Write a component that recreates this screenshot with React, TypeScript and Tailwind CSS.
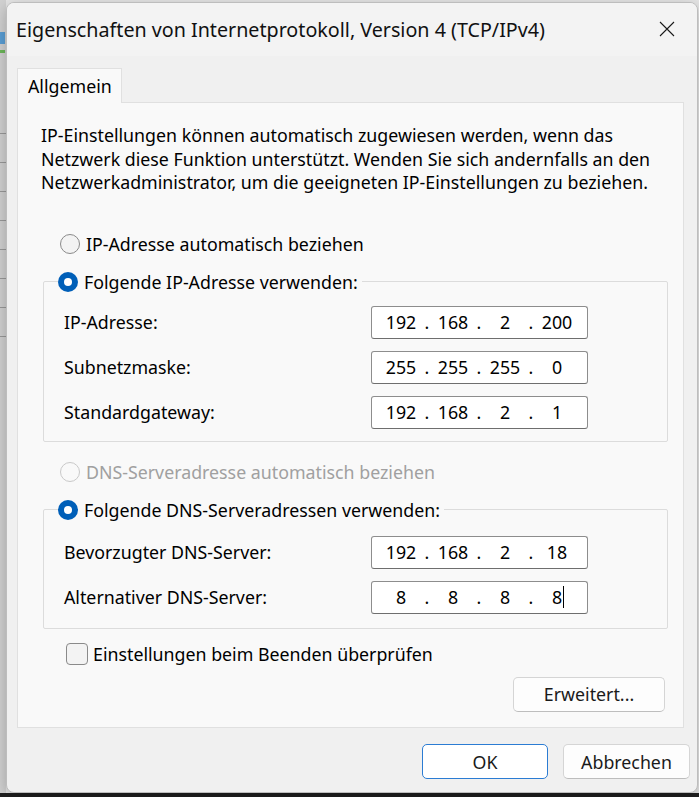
import type { ReactNode } from "react";

const font = "font-['Segoe_UI','Noto_Sans',sans-serif]";

function Radio({ checked, disabled }: { checked?: boolean; disabled?: boolean }) {
  if (checked) {
    return (
      <span className="flex h-[20px] w-[20px] shrink-0 items-center justify-center rounded-full bg-[#005fb8]">
        <span className="h-[8px] w-[8px] rounded-full bg-white" />
      </span>
    );
  }
  return (
    <span
      className={
        disabled
          ? "h-[20px] w-[20px] shrink-0 rounded-full border border-[#c9c9c9] bg-[#f9f9f9]"
          : "h-[20px] w-[20px] shrink-0 rounded-full border border-[#8a8a8a] bg-[#f3f3f3]"
      }
    />
  );
}

function RadioLabel({
  checked,
  disabled,
  children,
}: {
  checked?: boolean;
  disabled?: boolean;
  children: ReactNode;
}) {
  return (
    <div className="flex h-[24px] items-center gap-[6px]">
      <Radio checked={checked} disabled={disabled} />
      <span className={disabled ? "text-[#a0a0a0]" : "text-black"}>{children}</span>
    </div>
  );
}

function IpField({ parts, caret }: { parts: string[]; caret?: boolean }) {
  return (
    <div className="flex h-[33px] w-[217px] items-center rounded-[3px] border border-[#8d8d8d] border-b-[#6e6e6e] bg-white pl-[9px]">
      {parts.map((p, i) => (
        <div key={i} className="flex items-center">
          {i > 0 ? <span className="w-[12px] text-center">.</span> : null}
          <span className="relative w-[40px] text-center">
            {p}
            {caret && i === parts.length - 1 ? (
              <span className="absolute left-[26px] top-[1px] h-[22px] w-[1px] bg-black" />
            ) : null}
          </span>
        </div>
      ))}
    </div>
  );
}

function Row({ label, parts, caret }: { label: string; parts: string[]; caret?: boolean }) {
  return (
    <div className="flex items-center justify-between pl-[20px] pr-[79px]">
      <span>{label}</span>
      <IpField parts={parts} caret={caret} />
    </div>
  );
}

function Group({ legend, children }: { legend: string; children: ReactNode }) {
  return (
    <fieldset className="ml-[25px] mr-[15px] rounded-[2px] border border-[#dcdcdc] p-0">
      <legend className="ml-[14px] pr-[4px]">
        <RadioLabel checked>{legend}</RadioLabel>
      </legend>
      {children}
    </fieldset>
  );
}

export default function App() {
  return (
    <div className={`relative h-[797px] w-[699px] overflow-hidden bg-[#1f1f1f] ${font} text-[17.8px] leading-[24px] text-black`}>
      {/* background window on the desktop */}
      <div className="h-[793px] w-full bg-[#e6e6e6]">
        <div className="flex h-full w-[6px] flex-col bg-[#d2d2d2]">
          <div className="mt-[32px] h-[12px] w-[5px] bg-[#5a9fd6]" />
          <div className="mt-[6px] h-[3px] w-[5px] bg-[#6cb85a]" />
          <div className="mt-[80px] flex flex-col gap-[28px]">
            <div className="h-[1px] bg-[#9a9a9a]" />
            <div className="h-[1px] bg-[#9a9a9a]" />
            <div className="h-[1px] bg-[#9a9a9a]" />
            <div className="h-[1px] bg-[#9a9a9a]" />
            <div className="h-[1px] bg-[#9a9a9a]" />
            <div className="h-[1px] bg-[#9a9a9a]" />
            <div className="h-[1px] bg-[#9a9a9a]" />
            <div className="h-[1px] bg-[#9a9a9a]" />
          </div>
        </div>
      </div>

      {/* dialog */}
      <div className="absolute left-[6px] top-[2px] flex h-[791px] w-[692px] flex-col overflow-hidden rounded-[8px] border border-[#bdbdbd] bg-[#f0f0f0] shadow-[0_4px_16px_rgba(0,0,0,0.25)]">
        <div className="flex h-[53px] shrink-0 items-center justify-between bg-[#f3f3f3] pl-[9px] pr-[22px]">
          <span className="text-[19.7px] text-[#111]">Eigenschaften von Internetprotokoll, Version 4 (TCP/IPv4)</span>
          <svg width="16" height="16" viewBox="0 0 16 16" className="mt-[-2px]">
            <path d="M1 1 L15 15 M15 1 L1 15" stroke="#1a1a1a" strokeWidth="1.1" fill="none" />
          </svg>
        </div>

        <div className="flex flex-1 flex-col pl-[10px] pt-[12px]">
          <div className="relative z-10 -mb-[1px] flex h-[35px] w-[105px] items-center border border-b-0 border-[#e0e0e0] bg-[#f9f9f9] pl-[10px]">
            Allgemein
          </div>
          <div className="flex h-[626px] w-[667px] flex-col border border-[#e0e0e0] bg-[#f9f9f9]">
            <p className="pl-[23px] pr-[10px] pt-[21px] leading-[23.5px]">
              IP-Einstellungen können automatisch zugewiesen werden, wenn das
              <br />
              Netzwerk diese Funktion unterstützt. Wenden Sie sich andernfalls an den
              <br />
              Netzwerkadministrator, um die geeigneten IP-Einstellungen zu beziehen.
            </p>

            <div className="mt-[37px] pl-[42px]">
              <RadioLabel>IP-Adresse automatisch beziehen</RadioLabel>
            </div>

            <div className="mt-[14px]">
              <Group legend="Folgende IP-Adresse verwenden:">
                <div className="flex flex-col gap-[12px] pb-[12px] pt-[12px]">
                  <Row label="IP-Adresse:" parts={["192", "168", "2", "200"]} />
                  <Row label="Subnetzmaske:" parts={["255", "255", "255", "0"]} />
                  <Row label="Standardgateway:" parts={["192", "168", "2", "1"]} />
                </div>
              </Group>
            </div>

            <div className="mt-[18px] pl-[42px]">
              <RadioLabel disabled>DNS-Serveradresse automatisch beziehen</RadioLabel>
            </div>

            <div className="mt-[14px]">
              <Group legend="Folgende DNS-Serveradressen verwenden:">
                <div className="flex flex-col gap-[12px] pb-[14px] pt-[14px]">
                  <Row label="Bevorzugter DNS-Server:" parts={["192", "168", "2", "18"]} />
                  <Row label="Alternativer DNS-Server:" parts={["8", "8", "8", "8"]} caret />
                </div>
              </Group>
            </div>

            <div className="mt-[13px] flex items-center gap-[5px] pl-[48px]">
              <span className="h-[22px] w-[22px] rounded-[4px] border border-[#8a8a8a] bg-[#f3f3f3]" />
              <span>Einstellungen beim Beenden überprüfen</span>
            </div>

            <div className="mt-[11px] flex justify-end pr-[18px]">
              <button className="h-[35px] w-[152px] rounded-[5px] border border-[#d5d5d5] border-b-[#bdbdbd] bg-[#fdfdfd] text-[#1a1a1a]">
                Erweitert...
              </button>
            </div>
          </div>

          <div className="mt-[16px] flex justify-end gap-[15px] pr-[7px]">
            <button className="h-[35px] w-[126px] rounded-[5px] border-[1.5px] border-[#2b7cd3] bg-white text-[#1a1a1a]">
              OK
            </button>
            <button className="h-[35px] w-[127px] rounded-[5px] border border-[#d5d5d5] border-b-[#bdbdbd] bg-[#fdfdfd] text-[#1a1a1a]">
              Abbrechen
            </button>
          </div>
        </div>
      </div>
    </div>
  );
}
